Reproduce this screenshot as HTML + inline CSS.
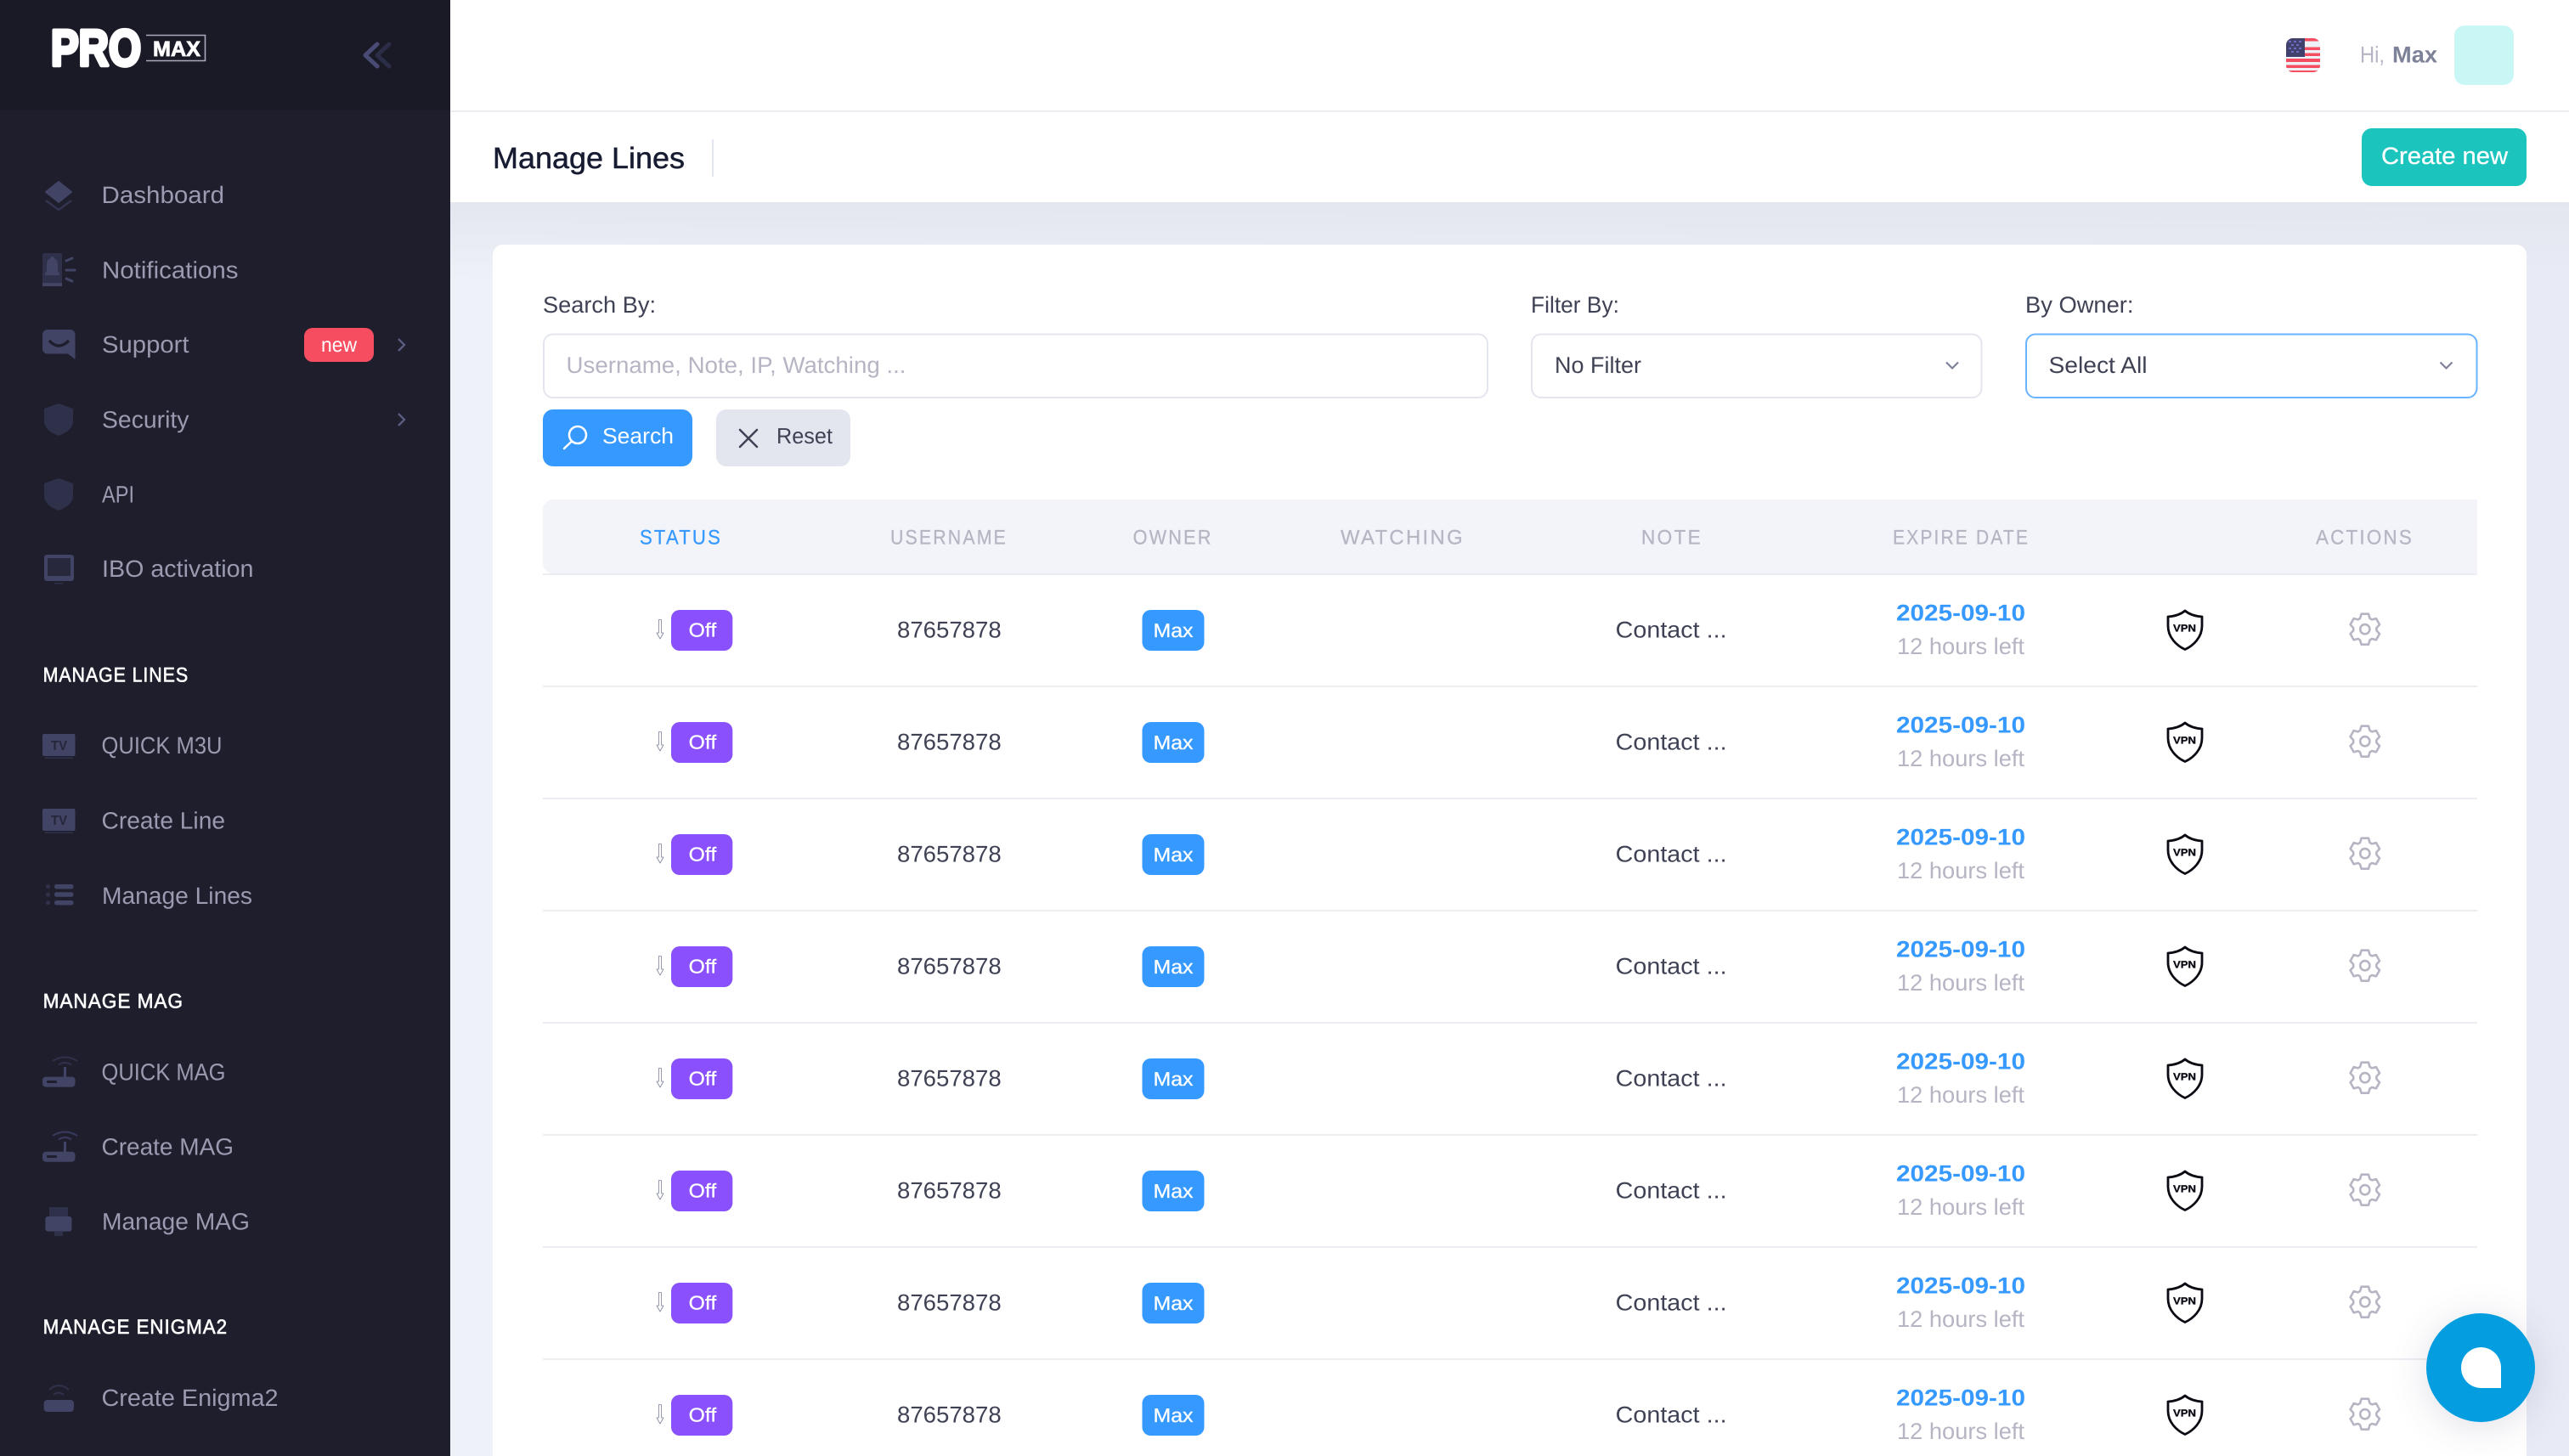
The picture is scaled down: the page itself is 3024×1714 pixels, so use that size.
<!DOCTYPE html>
<html lang="en">
<head>
<meta charset="utf-8">
<title>Manage Lines</title>
<style>
html,body{margin:0;padding:0;width:3024px;height:1714px;overflow:hidden;background:#eef0f8}
body{position:relative;font-family:"Liberation Sans",sans-serif}
svg.page{position:absolute;left:0;top:0;display:block}
text{font-family:"Liberation Sans",sans-serif;text-rendering:geometricPrecision}
.s{font-size:28px;fill:#9a9bb0}
.h{font-size:24px;fill:#fff;stroke:#fff;stroke-width:.6px;letter-spacing:1px}
.l{font-size:27px;fill:#3f4254}
.ph{font-size:27px;fill:#b5b5c3}
.th{font-size:24px;fill:#b5b5c3;stroke:#b5b5c3;stroke-width:.3px;letter-spacing:2.400px}
.bd{font-size:23px;fill:#fff;stroke:#fff;stroke-width:.3px}
.c{font-size:27px;fill:#3f4254}
.d{font-size:27px;font-weight:700;fill:#3699ff}
.m{font-size:27px;fill:#b5b5c3}
.v{font-size:12px;font-weight:700;fill:#0b0b14;stroke:#0b0b14;stroke-width:.3px}
.chat{position:absolute;left:2856px;top:1546px;width:128px;height:128px;border-radius:50%;background:#049ee0;box-shadow:0 6px 44px rgba(70,70,120,.17)}
.chat i{position:absolute;left:41px;top:40px;width:47px;height:48px;background:#fff;border-radius:50% 50% 0 50%}
</style>
</head>
<body>
<svg class="page" width="3024" height="1714" viewBox="0 0 3024 1714" xmlns="http://www.w3.org/2000/svg">
<defs>
<linearGradient id="bgx" x1="0" x2="1" y1="0" y2="0"><stop offset="0" stop-color="#eef1f8"/><stop offset="1" stop-color="#e8ebf5"/></linearGradient>
<linearGradient id="bgy" x1="0" x2="0" y1="0" y2="1"><stop offset="0" stop-color="#e4e6ef"/><stop offset="1" stop-color="#e4e6ef" stop-opacity="0"/></linearGradient>
<clipPath id="flagclip"><rect x="2691" y="45" width="40" height="40" rx="8"/></clipPath>
<g id="gear" fill="none" stroke="#b5b5c3" stroke-width="2.600" stroke-linejoin="round">
<path d="M-5.700 -12.800L-4.200 -18L4.200 -18L5.700 -12.800L8.200 -11.300L13.200 -12.600L17.200 -5.400L13.600 -1.500L13.600 1.500L17.200 5.400L13.200 12.600L8.200 11.300L5.700 12.800L4.200 18L-4.200 18L-5.700 12.800L-8.200 11.300L-13.200 12.600L-17.200 5.400L-13.600 1.500L-13.600 -1.500L-17.200 -5.400L-13.200 -12.600L-8.200 -11.300Z"/>
<circle r="5.600"/>
</g>
<path id="shield" fill="#fff" stroke="#0b0b14" stroke-width="2.800" stroke-linejoin="round" d="M2572 719C2566 724 2559 725.500 2552 726V737C2552 750 2562 760 2572 764.500C2582 760 2592 750 2592 737V726C2585 725.500 2578 724 2572 719Z"/>
<path id="arrow" fill="#fff" stroke="#7e8299" stroke-width=".8" stroke-linejoin="round" d="M775.500 729.500H778.500V745H781L777 752L773 745H775.500Z"/>
</defs>

<!-- page background -->
<rect x="530" y="0" width="2494" height="1714" fill="url(#bgx)"/>
<rect x="530" y="238" width="2494" height="90" fill="url(#bgy)"/>

<!-- sidebar -->
<rect x="0" y="0" width="530" height="1714" fill="#1e1e2d"/>
<rect x="0" y="0" width="530" height="130" fill="#1a1a27"/>

<!-- logo -->
<text x="60" y="77" font-size="60" font-weight="700" fill="#fff" stroke="#fff" stroke-width="4.500" stroke-linejoin="round" textLength="106" lengthAdjust="spacingAndGlyphs">PRO</text>
<path d="M172 41.500H241.500V71.500H172" fill="none" stroke="#a9a9b9" stroke-width="1.600"/>
<text x="180" y="66" font-size="25" font-weight="700" fill="#fff" stroke="#fff" stroke-width=".8" textLength="56" lengthAdjust="spacingAndGlyphs">MAX</text>

<!-- collapse -->
<path d="M444 52L430 65L444 78" fill="none" stroke="#494b74" stroke-width="5" stroke-linecap="round" stroke-linejoin="round"/>
<path d="M458 52L444 65L458 78" fill="none" stroke="#2c2d46" stroke-width="5" stroke-linecap="round" stroke-linejoin="round"/>

<!-- sidebar icons -->
<path d="M69 214L84 226L69 238L54 226Z" fill="#424465" stroke="#424465" stroke-width="2" stroke-linejoin="round"/>
<path d="M54 236L69 247L84 236" fill="none" stroke="#33344f" stroke-width="2.500"/>

<rect x="50" y="298" width="23" height="39" rx="2" fill="#2f304a"/>
<path d="M61.500 302c-1.500 0-2 1-2 2-3.500 1.500-4.500 4-4.500 8v7l-2 3v2h17v-2l-2-3v-7c0-4-1-6.500-4.500-8 0-1-.5-2-2-2z" fill="#424465"/>
<rect x="50" y="333" width="23" height="4" fill="#424465"/>
<path d="M78 307L85 304M78 318H88M78 328L85 331" stroke="#424465" stroke-width="3" stroke-linecap="round"/>

<path d="M56 388H82.500A6 6 0 0 1 88.500 394V423L80 416.500H56A6 6 0 0 1 50 410.500V394A6 6 0 0 1 56 388Z" fill="#424465"/>
<path d="M58 401Q69 413 81 401" fill="none" stroke="#1e1e2d" stroke-width="3.500"/>

<path d="M69 475L86 481V495Q86 507 69 513Q52 507 52 495V481Z" fill="#2f304a"/>
<path d="M69 563L86 569V583Q86 595 69 601Q52 595 52 583V569Z" fill="#2f304a"/>

<rect x="52" y="653" width="35" height="31" rx="3" fill="#424465"/>
<rect x="56" y="657" width="27" height="21" fill="#28283c"/>
<rect x="64" y="686" width="10" height="1.500" fill="#2f304a"/>

<rect x="50" y="864" width="38.500" height="26" rx="2" fill="#424465"/>
<text x="60" y="883" font-size="16" font-weight="700" fill="#25263a" textLength="19" lengthAdjust="spacingAndGlyphs">TV</text>
<rect x="53" y="891.500" width="33" height="1.500" fill="#2f304a"/>
<rect x="50" y="952" width="38.500" height="26" rx="2" fill="#424465"/>
<text x="60" y="971" font-size="16" font-weight="700" fill="#25263a" textLength="19" lengthAdjust="spacingAndGlyphs">TV</text>
<rect x="53" y="979.500" width="33" height="1.500" fill="#2f304a"/>

<circle cx="56.500" cy="1043.500" r="2.600" fill="#2f304a"/><circle cx="56.500" cy="1053" r="2.600" fill="#2f304a"/><circle cx="56.500" cy="1062.600" r="2.600" fill="#2f304a"/>
<rect x="64" y="1041" width="22.500" height="5.500" rx="2.500" fill="#424465"/><rect x="64" y="1050.300" width="22.500" height="5.500" rx="2.500" fill="#424465"/><rect x="64" y="1060" width="22.500" height="5.500" rx="2.500" fill="#424465"/>

<rect x="50" y="1267.600" width="38.500" height="12" rx="4" fill="#424465"/>
<rect x="55" y="1272" width="12" height="3" rx="1" fill="#1e1e2d"/>
<rect x="75" y="1256" width="3" height="12" fill="#424465"/>
<path d="M62 1249Q76.500 1240 91 1249M69 1253.500Q76.500 1248.500 84 1253.500" fill="none" stroke="#2f304a" stroke-width="2"/>

<rect x="50" y="1355.700" width="38.500" height="12" rx="4" fill="#424465"/>
<rect x="55" y="1360" width="12" height="3" rx="1" fill="#1e1e2d"/>
<rect x="75" y="1344" width="3" height="12" fill="#424465"/>
<path d="M62 1337Q76.500 1328 91 1337M69 1341.500Q76.500 1336.500 84 1341.500" fill="none" stroke="#37385a" stroke-width="2.200"/>

<rect x="58" y="1421" width="22" height="11" fill="#2f304a"/>
<rect x="53.400" y="1432" width="31" height="17.600" rx="3" fill="#424465"/>
<rect x="64" y="1450" width="10" height="5" fill="#2f304a"/>

<rect x="51.600" y="1648" width="35.400" height="14" rx="4" fill="#424465"/>
<path d="M58 1636Q69 1626 81 1636M63 1642Q69 1637 75 1642" fill="none" stroke="#2f304a" stroke-width="2.200"/>

<!-- sidebar chevrons -->
<path d="M469 399L476 406L469 413" fill="none" stroke="#5a5c80" stroke-width="2.400"/>
<path d="M469 487L476 494L469 501" fill="none" stroke="#5a5c80" stroke-width="2.400"/>

<!-- sidebar text -->
<g transform="translate(-1,0)">
<text class="s" x="120.500" y="239" textLength="144.500" lengthAdjust="spacingAndGlyphs">Dashboard</text>
<text class="s" x="121" y="327.500" textLength="160.500" lengthAdjust="spacingAndGlyphs">Notifications</text>
<text class="s" x="121" y="415" textLength="102.500" lengthAdjust="spacingAndGlyphs">Support</text>
<text class="s" x="121" y="503.500" textLength="102.500" lengthAdjust="spacingAndGlyphs">Security</text>
<text class="s" x="121" y="591.500" textLength="38" lengthAdjust="spacingAndGlyphs">API</text>
<text class="s" x="121" y="679" textLength="178.500" lengthAdjust="spacingAndGlyphs">IBO activation</text>
<text class="s" x="120.500" y="887" textLength="142" lengthAdjust="spacingAndGlyphs">QUICK M3U</text>
<text class="s" x="120.500" y="975.500" textLength="145.500" lengthAdjust="spacingAndGlyphs">Create Line</text>
<text class="s" x="121" y="1064" textLength="177" lengthAdjust="spacingAndGlyphs">Manage Lines</text>
<text class="s" x="120.500" y="1271.500" textLength="146" lengthAdjust="spacingAndGlyphs">QUICK MAG</text>
<text class="s" x="120.500" y="1359.500" textLength="155.500" lengthAdjust="spacingAndGlyphs">Create MAG</text>
<text class="s" x="121" y="1447.500" textLength="174" lengthAdjust="spacingAndGlyphs">Manage MAG</text>
<text class="s" x="120.500" y="1655" textLength="208" lengthAdjust="spacingAndGlyphs">Create Enigma2</text>
</g>
<text class="h" x="50.600" y="802.500" textLength="171.400" lengthAdjust="spacingAndGlyphs">MANAGE LINES</text>
<text class="h" x="50.600" y="1186.500" textLength="165.400" lengthAdjust="spacingAndGlyphs">MANAGE MAG</text>
<text class="h" x="50.600" y="1570" textLength="217.400" lengthAdjust="spacingAndGlyphs">MANAGE ENIGMA2</text>

<rect x="358" y="386" width="82" height="40" rx="10" fill="#f64e60"/>
<text x="378" y="414" font-size="24" fill="#fff" textLength="42" lengthAdjust="spacingAndGlyphs">new</text>

<!-- top bar -->
<rect x="530" y="0" width="2494" height="238" fill="#fff"/>
<rect x="530" y="130" width="2494" height="2" fill="#ebedf3"/>
<g clip-path="url(#flagclip)">
<rect x="2691" y="45" width="40" height="40" fill="#eef0f8"/>
<path fill="#f64e60" d="M2691 45h40v3.500h-40zM2691 55.500h40v3.500h-40zM2691 62.500h40v3.500h-40zM2691 69h40v4h-40zM2691 76.500h40v3.500h-40zM2691 83h40v2h-40z"/>
<rect x="2691" y="45" width="22" height="22" fill="#41416e"/>
<path fill="#6f6ac0" d="M2694 48h3v2h-3zM2700 48h3v2h-3zM2706 48h3v2h-3zM2697 52h3v2h-3zM2703 52h3v2h-3zM2694 56h3v2h-3zM2700 56h3v2h-3zM2706 56h3v2h-3zM2697 60h3v2h-3zM2703 60h3v2h-3z"/>
</g>
<text x="2778" y="73.300" font-size="27" fill="#b5b5c3" textLength="29" lengthAdjust="spacingAndGlyphs">Hi,</text>
<text x="2816" y="73.300" font-size="27" font-weight="700" fill="#7e8299" textLength="53" lengthAdjust="spacingAndGlyphs">Max</text>
<rect x="2889" y="30" width="70" height="70" rx="12" fill="#c9f7f5"/>

<!-- sub header -->
<text x="580" y="198" font-size="35" fill="#181c32" stroke="#181c32" stroke-width=".5" textLength="226" lengthAdjust="spacingAndGlyphs">Manage Lines</text>
<rect x="838" y="164" width="2" height="44" fill="#e4e6ef"/>
<rect x="2780" y="151" width="194" height="68" rx="12" fill="#1bc5bd"/>
<text x="2803" y="193" font-size="28" fill="#fff" stroke="#fff" stroke-width=".3" textLength="149" lengthAdjust="spacingAndGlyphs">Create new</text>

<!-- card -->
<path d="M592 288H2962A12 12 0 0 1 2974 300V1714H580V300A12 12 0 0 1 592 288Z" fill="#fff"/>

<!-- filters -->
<text class="l" x="639" y="368" textLength="133" lengthAdjust="spacingAndGlyphs">Search By:</text>
<rect x="640" y="393.500" width="1111" height="74.500" rx="11" fill="#fff" stroke="#e4e6ef" stroke-width="2"/>
<text class="ph" x="666.500" y="439" textLength="400" lengthAdjust="spacingAndGlyphs">Username, Note, IP, Watching ...</text>

<rect x="639" y="482" width="176" height="67" rx="12" fill="#3699ff"/>
<circle cx="680" cy="512" r="10" fill="none" stroke="#fff" stroke-width="2.500"/>
<path d="M673 519.500L664 528" stroke="#fff" stroke-width="2.500" stroke-linecap="round"/>
<text x="709" y="522" font-size="26" fill="#fff" textLength="84" lengthAdjust="spacingAndGlyphs">Search</text>

<rect x="843" y="482" width="158" height="67" rx="12" fill="#e4e6ef"/>
<path d="M871 506L891 526M891 506L871 526" stroke="#3f4254" stroke-width="2.500" stroke-linecap="round"/>
<text x="914" y="522" font-size="26" fill="#3f4254" textLength="66" lengthAdjust="spacingAndGlyphs">Reset</text>

<text class="l" x="1802" y="368" textLength="104" lengthAdjust="spacingAndGlyphs">Filter By:</text>
<rect x="1803" y="393.500" width="529.500" height="74.500" rx="11" fill="#fff" stroke="#e4e6ef" stroke-width="2"/>
<text class="l" x="1830" y="439" textLength="102" lengthAdjust="spacingAndGlyphs">No Filter</text>
<path d="M2291 426.500L2298 433.500L2305 426.500" fill="none" stroke="#7e8299" stroke-width="2.200"/>

<text class="l" x="2384" y="368" textLength="127.500" lengthAdjust="spacingAndGlyphs">By Owner:</text>
<rect x="2385" y="393.500" width="530.500" height="74.500" rx="11" fill="#fff" stroke="#69b3ff" stroke-width="2"/>
<text class="l" x="2411.500" y="439" textLength="116" lengthAdjust="spacingAndGlyphs">Select All</text>
<path d="M2872.500 426.500L2879.500 433.500L2886.500 426.500" fill="none" stroke="#7e8299" stroke-width="2.200"/>

<!-- table head -->
<path d="M651 588H2916V675H651A12 12 0 0 1 639 663V600A12 12 0 0 1 651 588Z" fill="#f3f4f9"/>
<rect x="639" y="675" width="2277" height="2" fill="#ebedf3"/>
<text class="th" x="753" y="640.500" textLength="97" lengthAdjust="spacingAndGlyphs" style="fill:#3699ff;stroke:#3699ff">STATUS</text>
<text class="th" x="1048" y="640.500" textLength="138" lengthAdjust="spacingAndGlyphs">USERNAME</text>
<text class="th" x="1333.600" y="640.500" textLength="94" lengthAdjust="spacingAndGlyphs">OWNER</text>
<text class="th" x="1578" y="640.500" textLength="146" lengthAdjust="spacingAndGlyphs">WATCHING</text>
<text class="th" x="1932" y="640.500" textLength="72" lengthAdjust="spacingAndGlyphs">NOTE</text>
<text class="th" x="2228" y="640.500" textLength="161" lengthAdjust="spacingAndGlyphs">EXPIRE DATE</text>
<text class="th" x="2726" y="640.500" textLength="115" lengthAdjust="spacingAndGlyphs">ACTIONS</text>

<!-- rows -->
<g>
<rect x="639" y="807" width="2277" height="2" fill="#ebedf3"/>
<use href="#arrow"/><rect x="790" y="718" width="72.300" height="48" rx="10" fill="#8950fc"/>
<text class="bd" x="810.700" y="749.500" textLength="32.500" lengthAdjust="spacingAndGlyphs">Off</text>
<text class="c" x="1056" y="750.500" textLength="122.700" lengthAdjust="spacingAndGlyphs">87657878</text>
<rect x="1344.500" y="718" width="73" height="48" rx="10" fill="#3699ff"/>
<text class="bd" x="1357.500" y="750" textLength="47" lengthAdjust="spacingAndGlyphs">Max</text>
<text class="c" x="1901.600" y="750.500" textLength="131" lengthAdjust="spacingAndGlyphs">Contact ...</text>
<text class="d" x="2232" y="730.700" textLength="152" lengthAdjust="spacingAndGlyphs">2025-09-10</text>
<text class="m" x="2233" y="770" textLength="150" lengthAdjust="spacingAndGlyphs">12 hours left</text>
<use href="#shield"/><text class="v" x="2558" y="743.500" textLength="27" lengthAdjust="spacingAndGlyphs">VPN</text>
<use href="#gear" x="2783.800" y="740.700"/>
</g>
<g transform="translate(0,132)">
<rect x="639" y="807" width="2277" height="2" fill="#ebedf3"/>
<use href="#arrow"/><rect x="790" y="718" width="72.300" height="48" rx="10" fill="#8950fc"/>
<text class="bd" x="810.700" y="749.500" textLength="32.500" lengthAdjust="spacingAndGlyphs">Off</text>
<text class="c" x="1056" y="750.500" textLength="122.700" lengthAdjust="spacingAndGlyphs">87657878</text>
<rect x="1344.500" y="718" width="73" height="48" rx="10" fill="#3699ff"/>
<text class="bd" x="1357.500" y="750" textLength="47" lengthAdjust="spacingAndGlyphs">Max</text>
<text class="c" x="1901.600" y="750.500" textLength="131" lengthAdjust="spacingAndGlyphs">Contact ...</text>
<text class="d" x="2232" y="730.700" textLength="152" lengthAdjust="spacingAndGlyphs">2025-09-10</text>
<text class="m" x="2233" y="770" textLength="150" lengthAdjust="spacingAndGlyphs">12 hours left</text>
<use href="#shield"/><text class="v" x="2558" y="743.500" textLength="27" lengthAdjust="spacingAndGlyphs">VPN</text>
<use href="#gear" x="2783.800" y="740.700"/>
</g>
<g transform="translate(0,264)">
<rect x="639" y="807" width="2277" height="2" fill="#ebedf3"/>
<use href="#arrow"/><rect x="790" y="718" width="72.300" height="48" rx="10" fill="#8950fc"/>
<text class="bd" x="810.700" y="749.500" textLength="32.500" lengthAdjust="spacingAndGlyphs">Off</text>
<text class="c" x="1056" y="750.500" textLength="122.700" lengthAdjust="spacingAndGlyphs">87657878</text>
<rect x="1344.500" y="718" width="73" height="48" rx="10" fill="#3699ff"/>
<text class="bd" x="1357.500" y="750" textLength="47" lengthAdjust="spacingAndGlyphs">Max</text>
<text class="c" x="1901.600" y="750.500" textLength="131" lengthAdjust="spacingAndGlyphs">Contact ...</text>
<text class="d" x="2232" y="730.700" textLength="152" lengthAdjust="spacingAndGlyphs">2025-09-10</text>
<text class="m" x="2233" y="770" textLength="150" lengthAdjust="spacingAndGlyphs">12 hours left</text>
<use href="#shield"/><text class="v" x="2558" y="743.500" textLength="27" lengthAdjust="spacingAndGlyphs">VPN</text>
<use href="#gear" x="2783.800" y="740.700"/>
</g>
<g transform="translate(0,396)">
<rect x="639" y="807" width="2277" height="2" fill="#ebedf3"/>
<use href="#arrow"/><rect x="790" y="718" width="72.300" height="48" rx="10" fill="#8950fc"/>
<text class="bd" x="810.700" y="749.500" textLength="32.500" lengthAdjust="spacingAndGlyphs">Off</text>
<text class="c" x="1056" y="750.500" textLength="122.700" lengthAdjust="spacingAndGlyphs">87657878</text>
<rect x="1344.500" y="718" width="73" height="48" rx="10" fill="#3699ff"/>
<text class="bd" x="1357.500" y="750" textLength="47" lengthAdjust="spacingAndGlyphs">Max</text>
<text class="c" x="1901.600" y="750.500" textLength="131" lengthAdjust="spacingAndGlyphs">Contact ...</text>
<text class="d" x="2232" y="730.700" textLength="152" lengthAdjust="spacingAndGlyphs">2025-09-10</text>
<text class="m" x="2233" y="770" textLength="150" lengthAdjust="spacingAndGlyphs">12 hours left</text>
<use href="#shield"/><text class="v" x="2558" y="743.500" textLength="27" lengthAdjust="spacingAndGlyphs">VPN</text>
<use href="#gear" x="2783.800" y="740.700"/>
</g>
<g transform="translate(0,528)">
<rect x="639" y="807" width="2277" height="2" fill="#ebedf3"/>
<use href="#arrow"/><rect x="790" y="718" width="72.300" height="48" rx="10" fill="#8950fc"/>
<text class="bd" x="810.700" y="749.500" textLength="32.500" lengthAdjust="spacingAndGlyphs">Off</text>
<text class="c" x="1056" y="750.500" textLength="122.700" lengthAdjust="spacingAndGlyphs">87657878</text>
<rect x="1344.500" y="718" width="73" height="48" rx="10" fill="#3699ff"/>
<text class="bd" x="1357.500" y="750" textLength="47" lengthAdjust="spacingAndGlyphs">Max</text>
<text class="c" x="1901.600" y="750.500" textLength="131" lengthAdjust="spacingAndGlyphs">Contact ...</text>
<text class="d" x="2232" y="730.700" textLength="152" lengthAdjust="spacingAndGlyphs">2025-09-10</text>
<text class="m" x="2233" y="770" textLength="150" lengthAdjust="spacingAndGlyphs">12 hours left</text>
<use href="#shield"/><text class="v" x="2558" y="743.500" textLength="27" lengthAdjust="spacingAndGlyphs">VPN</text>
<use href="#gear" x="2783.800" y="740.700"/>
</g>
<g transform="translate(0,660)">
<rect x="639" y="807" width="2277" height="2" fill="#ebedf3"/>
<use href="#arrow"/><rect x="790" y="718" width="72.300" height="48" rx="10" fill="#8950fc"/>
<text class="bd" x="810.700" y="749.500" textLength="32.500" lengthAdjust="spacingAndGlyphs">Off</text>
<text class="c" x="1056" y="750.500" textLength="122.700" lengthAdjust="spacingAndGlyphs">87657878</text>
<rect x="1344.500" y="718" width="73" height="48" rx="10" fill="#3699ff"/>
<text class="bd" x="1357.500" y="750" textLength="47" lengthAdjust="spacingAndGlyphs">Max</text>
<text class="c" x="1901.600" y="750.500" textLength="131" lengthAdjust="spacingAndGlyphs">Contact ...</text>
<text class="d" x="2232" y="730.700" textLength="152" lengthAdjust="spacingAndGlyphs">2025-09-10</text>
<text class="m" x="2233" y="770" textLength="150" lengthAdjust="spacingAndGlyphs">12 hours left</text>
<use href="#shield"/><text class="v" x="2558" y="743.500" textLength="27" lengthAdjust="spacingAndGlyphs">VPN</text>
<use href="#gear" x="2783.800" y="740.700"/>
</g>
<g transform="translate(0,792)">
<rect x="639" y="807" width="2277" height="2" fill="#ebedf3"/>
<use href="#arrow"/><rect x="790" y="718" width="72.300" height="48" rx="10" fill="#8950fc"/>
<text class="bd" x="810.700" y="749.500" textLength="32.500" lengthAdjust="spacingAndGlyphs">Off</text>
<text class="c" x="1056" y="750.500" textLength="122.700" lengthAdjust="spacingAndGlyphs">87657878</text>
<rect x="1344.500" y="718" width="73" height="48" rx="10" fill="#3699ff"/>
<text class="bd" x="1357.500" y="750" textLength="47" lengthAdjust="spacingAndGlyphs">Max</text>
<text class="c" x="1901.600" y="750.500" textLength="131" lengthAdjust="spacingAndGlyphs">Contact ...</text>
<text class="d" x="2232" y="730.700" textLength="152" lengthAdjust="spacingAndGlyphs">2025-09-10</text>
<text class="m" x="2233" y="770" textLength="150" lengthAdjust="spacingAndGlyphs">12 hours left</text>
<use href="#shield"/><text class="v" x="2558" y="743.500" textLength="27" lengthAdjust="spacingAndGlyphs">VPN</text>
<use href="#gear" x="2783.800" y="740.700"/>
</g>
<g transform="translate(0,924)">
<use href="#arrow"/><rect x="790" y="718" width="72.300" height="48" rx="10" fill="#8950fc"/>
<text class="bd" x="810.700" y="749.500" textLength="32.500" lengthAdjust="spacingAndGlyphs">Off</text>
<text class="c" x="1056" y="750.500" textLength="122.700" lengthAdjust="spacingAndGlyphs">87657878</text>
<rect x="1344.500" y="718" width="73" height="48" rx="10" fill="#3699ff"/>
<text class="bd" x="1357.500" y="750" textLength="47" lengthAdjust="spacingAndGlyphs">Max</text>
<text class="c" x="1901.600" y="750.500" textLength="131" lengthAdjust="spacingAndGlyphs">Contact ...</text>
<text class="d" x="2232" y="730.700" textLength="152" lengthAdjust="spacingAndGlyphs">2025-09-10</text>
<text class="m" x="2233" y="770" textLength="150" lengthAdjust="spacingAndGlyphs">12 hours left</text>
<use href="#shield"/><text class="v" x="2558" y="743.500" textLength="27" lengthAdjust="spacingAndGlyphs">VPN</text>
<use href="#gear" x="2783.800" y="740.700"/>
</g>
</svg>
<div class="chat"><i></i></div>
</body>
</html>
